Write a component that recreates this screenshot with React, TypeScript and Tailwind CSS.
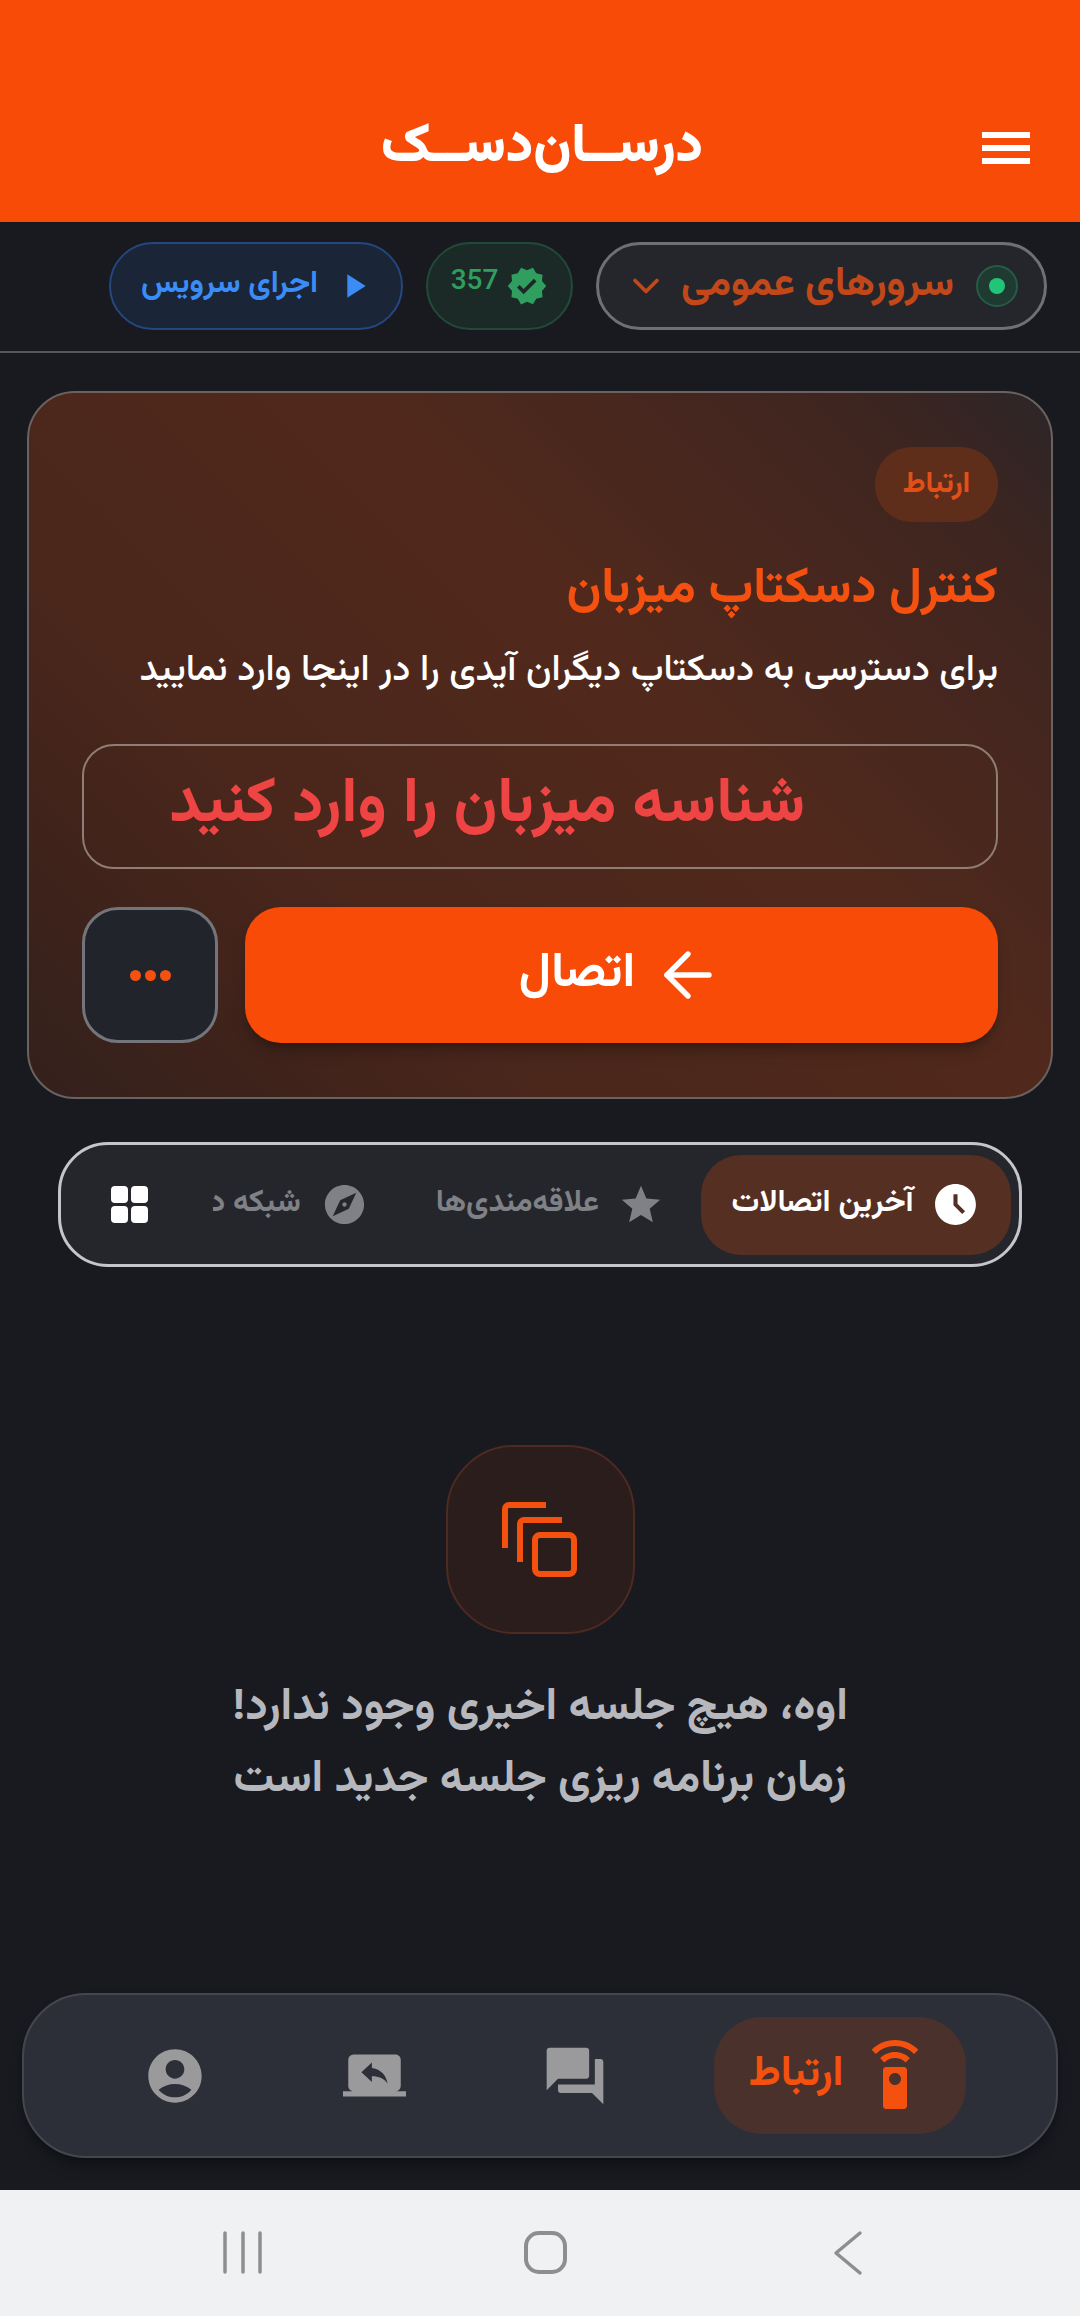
import { ArrowLeft, ChevronDown } from "lucide-react";
import {
  MdAccessTimeFilled,
  MdAccountCircle,
  MdExplore,
  MdForum,
  MdPlayArrow,
  MdScreenShare,
  MdSettingsRemote,
  MdStar,
  MdVerified,
} from "react-icons/md";

const fontClass = "font-['Vazirmatn','Noto_Sans_Arabic','Noto_Sans','DejaVu_Sans',sans-serif]";

function StatusRow() {
  return (
    <div className="flex h-[131px] shrink-0 items-center gap-[23px] border-b-2 border-[#55575c] pb-[2px] pr-[33px]">
      <div className="flex h-[88px] w-[451px] items-center rounded-[44px] border-[3px] border-[#6f7075] bg-[#25262c] pr-[26px]">
        <span className="flex h-[42px] w-[42px] shrink-0 items-center justify-center rounded-full border-2 border-[#245c45] bg-[#1f3a30]">
          <span className="h-4 w-4 rounded-full bg-[#22c578]" />
        </span>
        <span className="mr-[22px] whitespace-nowrap text-[41px] font-bold text-[#c2481a]">سرورهای عمومی</span>
        <ChevronDown size={44} strokeWidth={2} className="mr-auto ml-[25px] shrink-0 text-[#c2481a]" />
      </div>
      <div className="flex h-[88px] w-[147px] items-center justify-center gap-2 rounded-[44px] border-2 border-[#224a38] bg-[#1b2a27]">
        <MdVerified size={42} className="text-[#2f9e5f]" />
        <span className="-mt-3 font-['Roboto',sans-serif] text-[28px] font-medium text-[#2f9e5f]">357</span>
      </div>
      <div className="flex h-[88px] w-[294px] items-center gap-[16px] rounded-[44px] border-2 border-[#25477f] bg-[#1a2538] pr-[27px]">
        <MdPlayArrow size={40} className="shrink-0 text-[#3b8cf5]" />
        <span className="whitespace-nowrap text-[31px] font-bold text-[#3b8cf5]">اجرای سرویس</span>
      </div>
    </div>
  );
}

function ConnectCard() {
  return (
    <section className="mx-[27px] mt-[38px] flex h-[708px] shrink-0 flex-col items-start rounded-[48px] border-2 border-[#6a625f] bg-[linear-gradient(45deg,#33201c_0%,#4a261b_30%,#51291c_60%,#3e2520_88%,#2c2628_100%)] px-[53px] pt-[54px]">
      <span className="flex h-[75px] w-[123px] items-center justify-center rounded-[37px] bg-[#5f2e1b] text-[30px] font-bold text-[#e2501a]">
        ارتباط
      </span>
      <h1 className="mt-[38px] whitespace-nowrap text-[50px] font-bold leading-[60px] text-[#f45010]">کنترل دسکتاپ میزبان</h1>
      <p className="mt-[27px] whitespace-nowrap text-[37px] font-medium leading-[48px] text-white">
        برای دسترسی به دسکتاپ دیگران آیدی را در اینجا وارد نمایید
      </p>
      <div className="mt-[49px] flex h-[125px] w-full items-center whitespace-nowrap rounded-[32px] border-2 border-[#8f7d76] pr-[191px] text-[63px] font-bold text-[#ef4444]">
        شناسه میزبان را وارد کنید
      </div>
      <div className="mt-[38px] flex w-full gap-[27px]">
        <button className="flex h-[136px] flex-1 items-center justify-center gap-[17px] rounded-[36px] bg-[#f74b07] text-[49px] font-bold text-white shadow-lg shadow-black/25">
          <ArrowLeft size={72} strokeWidth={1.8} className="order-first" />
          اتصال
        </button>
        <button className="flex h-[136px] w-[136px] items-center justify-center gap-[4px] rounded-[36px] border-[3px] border-[#73757a] bg-[#22242b]">
          <span className="h-[11px] w-[11px] rounded-full bg-[#f4510f]" />
          <span className="h-[11px] w-[11px] rounded-full bg-[#f4510f]" />
          <span className="h-[11px] w-[11px] rounded-full bg-[#f4510f]" />
        </button>
      </div>
    </section>
  );
}

function Tabs() {
  return (
    <div className="mx-[58px] mt-[43px] flex h-[125px] shrink-0 items-center rounded-[50px] border-[3px] border-[#c5c6c9] bg-[#25262c] pr-[8px]">
      <div className="flex h-[100px] w-[798px] items-center overflow-hidden">
        <div className="flex h-[100px] w-[310px] shrink-0 items-center justify-center gap-[18px] whitespace-nowrap rounded-[40px] bg-[#552f22] text-[31px] font-bold text-white">
          <MdAccessTimeFilled size={49} className="shrink-0" />
          آخرین اتصالات
        </div>
        <div className="mr-[37px] flex shrink-0 items-center gap-[19px] whitespace-nowrap text-[31px] font-bold text-[#7f8186]">
          <MdStar size={46} />
          علاقه‌مندی‌ها
        </div>
        <div className="mr-[68px] flex shrink-0 items-center gap-[20px] whitespace-nowrap text-[31px] font-bold text-[#7f8186]">
          <MdExplore size={47} />
          شبکه داخلی
        </div>
      </div>
      <div className="mr-[65px] grid grid-cols-2 gap-[3px]">
        <span className="h-[17px] w-[17px] rounded-[4px] bg-white" />
        <span className="h-[17px] w-[17px] rounded-[4px] bg-white" />
        <span className="h-[17px] w-[17px] rounded-[4px] bg-white" />
        <span className="h-[17px] w-[17px] rounded-[4px] bg-white" />
      </div>
    </div>
  );
}

function EmptyState() {
  return (
    <div className="mt-[178px] flex shrink-0 flex-col items-center">
      <div className="flex h-[189px] w-[189px] items-center justify-center rounded-[68px] border-2 border-[#4f2a20] bg-[#2b1d1c]">
        <svg width="76" height="76" viewBox="0 0 76 76" fill="none" stroke="#f4510f" strokeWidth="6">
          <path d="M3 46V7a4 4 0 0 1 4-4h37" />
          <path d="M18 60V22a4 4 0 0 1 4-4h38" />
          <rect x="33" y="33" width="39" height="39" rx="5" />
        </svg>
      </div>
      <p className="mt-[38px] whitespace-nowrap text-center text-[45px] font-bold leading-[72px] text-[#b7b8bd]">
        اوه، هیچ جلسه اخیری وجود ندارد!
        <br />
        زمان برنامه ریزی جلسه جدید است
      </p>
    </div>
  );
}

function BottomNav() {
  return (
    <nav className="mx-[22px] mt-auto mb-[32px] flex h-[165px] shrink-0 items-center rounded-[64px] border-2 border-[#45474e] bg-[#2d2f38] shadow-lg shadow-black/30">
      <div className="mr-[90px] flex h-[117px] w-[252px] items-center justify-center gap-[16px] whitespace-nowrap rounded-[48px] bg-[#4b312c] text-[42px] font-bold text-[#f4510f]">
        <MdSettingsRemote size={72} className="shrink-0" />
        ارتباط
      </div>
      <MdForum size={68} className="mr-[105px] text-[#9a9a9c]" />
      <MdScreenShare size={63} className="mr-[135px] -scale-x-100 text-[#9a9a9c]" />
      <MdAccountCircle size={64} className="mr-[136px] text-[#9a9a9c]" />
    </nav>
  );
}

function SystemBar() {
  return (
    <div className="flex h-[126px] shrink-0 items-center bg-[#f0f1f3]" dir="ltr">
      <svg width="1080" height="126" viewBox="0 0 1080 126" fill="none" stroke="#8d8e92" strokeLinecap="round">
        <path d="M225 43v39M243 43v39M260 43v39" strokeWidth="3.5" />
        <rect x="526" y="43" width="39" height="39" rx="13" strokeWidth="4" />
        <path d="M860 43L836 63l24 20" strokeWidth="3.5" strokeLinejoin="round" />
      </svg>
    </div>
  );
}

export default function App() {
  return (
    <div dir="rtl" className={`flex h-[2316px] w-[1080px] flex-col overflow-hidden bg-[#181a20] ${fontClass}`}>
      <header className="flex h-[222px] shrink-0 items-center bg-[#f74b07] pt-[74px] text-white">
        <div className="mr-[50px] flex w-[48px] shrink-0 flex-col gap-[7px]">
          <span className="h-[6px] bg-white" />
          <span className="h-[6px] bg-white" />
          <span className="h-[6px] bg-white" />
        </div>
        <span className="mr-[279px] whitespace-nowrap text-[54px] font-black leading-[64px]">درســان‌دســک</span>
      </header>
      <StatusRow />
      <ConnectCard />
      <Tabs />
      <EmptyState />
      <BottomNav />
      <SystemBar />
    </div>
  );
}
